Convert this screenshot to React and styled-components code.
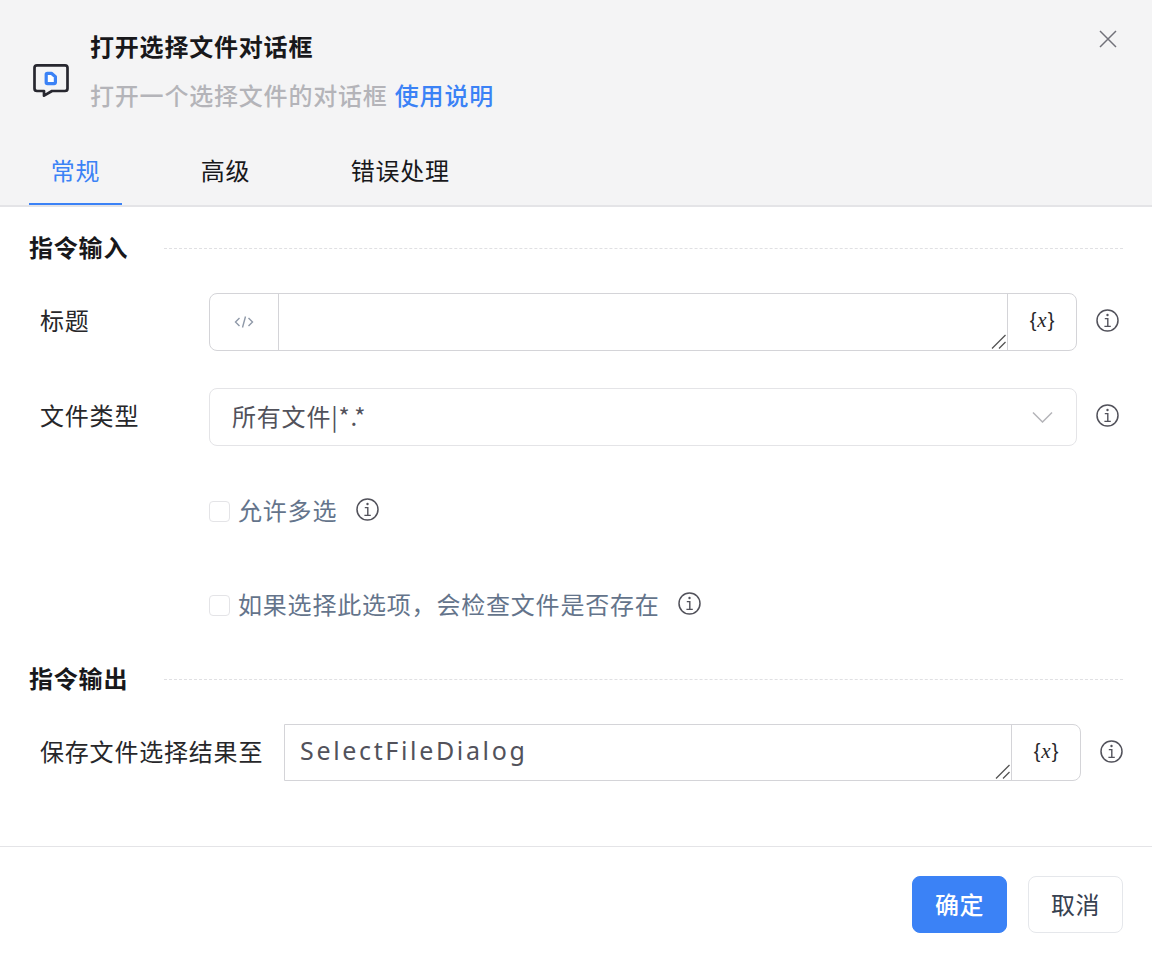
import React from "react";
import styled, { createGlobalStyle } from "styled-components";

const GlobalStyle = createGlobalStyle`
  html, body {
    margin: 0;
    padding: 0;
    background: #ffffff;
  }
  * {
    box-sizing: border-box;
  }
  body {
    font-family: "Noto Sans CJK SC", "Noto Sans", sans-serif;
    font-size: 24px;
    letter-spacing: 0.8px;
  }
`;

const Dialog = styled.div`
  width: 1152px;
  height: 962px;
  display: flex;
  flex-direction: column;
  background: #ffffff;
  overflow: hidden;
`;
const Header = styled.header`
  height: 207px;
  background: #f4f4f5;
  border-bottom: 2px solid #e4e4e7;
  display: flex;
  flex-direction: column;
`;
const TitleBar = styled.div`
  height: 138px;
  display: flex;
  align-items: center;
  padding: 0 35px 0 32px;
`;
const TitleIcon = styled.svg`
  width: 38px;
  height: 36px;
  margin-top: 20px;
  flex-shrink: 0;
`;
const TitleText = styled.div`
  margin-left: 20px;
  flex: 1;
  padding-top: 2px;
  h1 {
    margin: 0;
    font-size: 24px;
    line-height: 36px;
    font-weight: 700;
    color: #18181b;
  }
  p {
    margin: 13px 0 0;
    font-size: 24px;
    line-height: 36px;
    font-weight: 500;
    color: #b4b4b9;
  }
  a {
    color: #3b82f6;
    margin-left: 1px;
  }
`;
const CloseButton = styled.button`
  align-self: flex-start;
  margin-top: 30px;
  width: 18px;
  height: 18px;
  padding: 0;
  border: 0;
  background: none;
  display: flex;
  svg {
    width: 18px;
    height: 18px;
  }
`;
const Tabs = styled.nav`
  display: flex;
  gap: 57px;
  padding-left: 29px;
`;
const Tab = styled.div`
  height: 67px;
  padding: 14px 21.700px 0;
  line-height: 36px;
  color: ${(props) => (props.active ? "#3b82f6" : "#18181b")};
  border-bottom: 2px solid ${(props) => (props.active ? "#3b82f6" : "transparent")};
`;
const Body = styled.main`
  flex: 1;
  padding: 0 29px;
`;
const SectionHead = styled.div`
  display: flex;
  align-items: center;
  height: 36px;
  margin-top: ${(props) => props.top}px;
  h2 {
    margin: -4px 0 0;
    width: 135px;
    flex-shrink: 0;
    font-size: 24px;
    font-weight: 700;
    line-height: 36px;
    color: #18181b;
  }
  &::after {
    content: "";
    flex: 1;
    border-top: 1px dashed #e0e0e3;
    margin-top: -2px;
  }
`;
const Row = styled.div`
  display: flex;
  align-items: center;
  margin-top: ${(props) => props.top}px;
  padding-left: 11px;
  height: ${(props) => props.height}px;
`;
const Label = styled.label`
  width: ${(props) => props.width}px;
  flex-shrink: 0;
  color: #27272a;
  line-height: 36px;
  margin-top: -4px;
`;
const Field = styled.div`
  width: ${(props) => props.width}px;
  height: 100%;
  display: flex;
  border: 1px solid #d4d4d8;
  border-radius: ${(props) => (props.square ? "0 8px 8px 0" : "8px")};
  overflow: hidden;
`;
const CodeToggle = styled.div`
  width: 69px;
  flex-shrink: 0;
  display: flex;
  align-items: center;
  justify-content: center;
  border-right: 1px solid #d4d4d8;
  svg {
    width: 22px;
    height: 22px;
  }
`;
const TextWrap = styled.div`
  position: relative;
  flex: 1;
  min-width: 0;
`;
const TextBox = styled.textarea`
  display: block;
  width: 100%;
  height: 100%;
  border: 0;
  outline: 0;
  resize: none;
  padding: 8px 15px;
  font-family: "Noto Sans", "Noto Sans CJK SC", sans-serif;
  font-size: 25px;
  line-height: 34px;
  letter-spacing: 2.650px;
  color: #52525b;
  background: #ffffff;
`;
const ResizeGrip = styled.svg`
  position: absolute;
  right: 1px;
  bottom: 1px;
  width: 15px;
  height: 15px;
`;
const VariableButton = styled.div`
  width: 69px;
  flex-shrink: 0;
  display: flex;
  align-items: center;
  justify-content: center;
  border-left: 1px solid #d4d4d8;
  font-family: "Liberation Sans", sans-serif;
  font-size: 20px;
  letter-spacing: 0;
  color: #27272a;
  padding-bottom: 3px;
  i {
    font-family: "Liberation Serif", serif;
    font-size: 21px;
    margin: 0 1px;
  }
`;
const Select = styled.div`
  width: 868px;
  height: 100%;
  display: flex;
  align-items: center;
  justify-content: space-between;
  padding: 0 23px 0 22px;
  border: 1px solid #e4e4e7;
  border-radius: 8px;
  color: #52525b;
  span {
    margin-top: -4px;
  }
  svg {
    width: 21px;
    height: 12px;
  }
`;
const InfoIcon = styled.svg`
  width: 23px;
  height: 23px;
  flex-shrink: 0;
  margin-left: ${(props) => props.gap}px;
  margin-top: ${(props) => props.lift || 0}px;
`;
const CheckRow = styled.div`
  display: flex;
  align-items: center;
  height: 36px;
  margin-top: ${(props) => props.top}px;
  padding-left: 180px;
`;
const CheckBox = styled.span`
  width: 21px;
  height: 21px;
  border: 1px solid #e4e4e7;
  border-radius: 4px;
  background: #ffffff;
  margin-right: 8px;
  flex-shrink: 0;
`;
const CheckLabel = styled.span`
  color: #64748b;
  line-height: 36px;
  margin-top: -2px;
`;
const Footer = styled.footer`
  height: 116px;
  flex-shrink: 0;
  border-top: 1px solid #e4e4e7;
  display: flex;
  justify-content: flex-end;
  gap: 21px;
  padding: 29px 29px 0 0;
`;
const Button = styled.button`
  width: 95px;
  height: 57px;
  padding: 0 0 3px;
  border-radius: 8px;
  font-family: inherit;
  font-size: 24px;
  letter-spacing: 0.6px;
  font-weight: ${(props) => (props.primary ? 500 : 400)};
  color: ${(props) => (props.primary ? "#ffffff" : "#374151")};
  background: ${(props) => (props.primary ? "#3b82f6" : "#ffffff")};
  border: 1px solid ${(props) => (props.primary ? "#3b82f6" : "#e5e7eb")};
`;

function Info({ gap, lift }) {
  return (
    <InfoIcon gap={gap} lift={lift} viewBox="0 0 23 23" fill="none" stroke="#52525b" strokeWidth="1.5">
      <circle cx="11.5" cy="11.5" r="10.5" />
      <circle cx="11.5" cy="6" r="1.2" fill="#52525b" stroke="none" />
      <path d="M8.8 9.600h3v7.600M8.400 17.400h6.400" strokeWidth="1.4" />
    </InfoIcon>
  );
}

function Variable() {
  return (
    <VariableButton>
      {"{"}
      <i>x</i>
      {"}"}
    </VariableButton>
  );
}

function Grip() {
  return (
    <ResizeGrip viewBox="0 0 15 15" fill="none" stroke="#555555" strokeWidth="1.300">
      <path d="M1 14.500L14.500 1M8 14.500L14.500 8" />
    </ResizeGrip>
  );
}

export default function App() {
  return (
    <>
      <GlobalStyle />
      <Dialog>
        <Header>
          <TitleBar>
            <TitleIcon viewBox="0 0 38 36" fill="none">
              <path
                d="M5 4.300h28a2.500 2.500 0 0 1 2.500 2.500v20.700a2.500 2.500 0 0 1-2.500 2.500H20l-8 4.700v-4.700H5A2.500 2.500 0 0 1 2.500 27.500V6.800A2.500 2.500 0 0 1 5 4.300z"
                stroke="#27272f"
                strokeWidth="2.700"
                strokeLinejoin="round"
              />
              <path
                d="M15.400 12.300h4l4 3.400v5.800a1.200 1.200 0 0 1-1.200 1.200h-6.800a1.200 1.200 0 0 1-1.200-1.200v-8a1.200 1.200 0 0 1 1.200-1.200z"
                fill="#ffffff"
                stroke="#3b82f6"
                strokeWidth="3.200"
                strokeLinejoin="round"
              />
            </TitleIcon>
            <TitleText>
              <h1>打开选择文件对话框</h1>
              <p>
                打开一个选择文件的对话框 <a>使用说明</a>
              </p>
            </TitleText>
            <CloseButton aria-label="关闭">
              <svg viewBox="0 0 18 18" fill="none" stroke="#71717a" strokeWidth="1.5">
                <path d="M1 1l16 16M17 1L1 17" />
              </svg>
            </CloseButton>
          </TitleBar>
          <Tabs>
            <Tab active>常规</Tab>
            <Tab>高级</Tab>
            <Tab>错误处理</Tab>
          </Tabs>
        </Header>
        <Body>
          <SectionHead top={24}>
            <h2>指令输入</h2>
          </SectionHead>
          <Row top={26} height={58}>
            <Label width={169}>标题</Label>
            <Field width={868}>
              <CodeToggle>
                <svg viewBox="0 0 22 22" fill="none" stroke="#8f99a8" strokeWidth="1.400">
                  <path d="M6.500 7L2.500 11l4 4M15.500 7l4 4-4 4M12.500 5.500l-3 11" />
                </svg>
              </CodeToggle>
              <TextWrap>
                <TextBox />
                <Grip />
              </TextWrap>
              <Variable />
            </Field>
            <Info gap={19} lift={-4} />
          </Row>
          <Row top={37} height={58}>
            <Label width={169}>文件类型</Label>
            <Select>
              <span>所有文件|*.*</span>
              <svg viewBox="0 0 21 12" fill="none" stroke="#b4b4b9" strokeWidth="1.500">
                <path d="M1 1.500l9.500 9.500L20 1.500" />
              </svg>
            </Select>
            <Info gap={19} lift={-4} />
          </Row>
          <CheckRow top={47}>
            <CheckBox />
            <CheckLabel>允许多选</CheckLabel>
            <Info gap={19} lift={-3} />
          </CheckRow>
          <CheckRow top={58}>
            <CheckBox />
            <CheckLabel>如果选择此选项，会检查文件是否存在</CheckLabel>
            <Info gap={18} lift={-3} />
          </CheckRow>
          <SectionHead top={39}>
            <h2>指令输出</h2>
          </SectionHead>
          <Row top={26} height={57}>
            <Label width={244}>保存文件选择结果至</Label>
            <Field width={797} square>
              <TextWrap>
                <TextBox defaultValue="SelectFileDialog" />
                <Grip />
              </TextWrap>
              <Variable />
            </Field>
            <Info gap={19} lift={-2} />
          </Row>
        </Body>
        <Footer>
          <Button primary>确定</Button>
          <Button>取消</Button>
        </Footer>
      </Dialog>
    </>
  );
}
